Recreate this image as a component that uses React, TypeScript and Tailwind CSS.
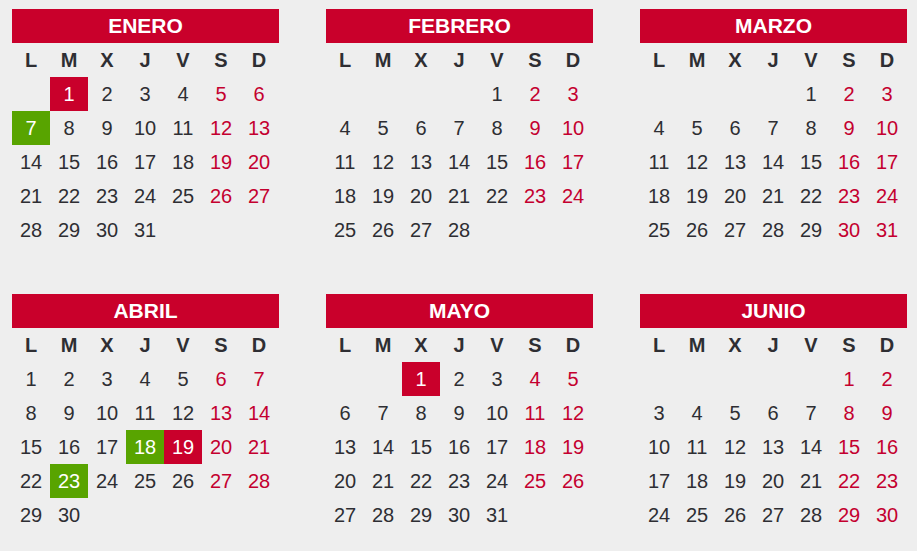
import React from "react"

type Mark = "red" | "green"

interface Month {
  name: string
  offset: number
  days: number
  marks?: Record<number, Mark>
}

const months: Month[] = [
  { name: "ENERO", offset: 1, days: 31, marks: { 1: "red", 7: "green" } },
  { name: "FEBRERO", offset: 4, days: 28 },
  { name: "MARZO", offset: 4, days: 31 },
  { name: "ABRIL", offset: 0, days: 30, marks: { 18: "green", 19: "red", 23: "green" } },
  { name: "MAYO", offset: 2, days: 31, marks: { 1: "red" } },
  { name: "JUNIO", offset: 5, days: 30 },
]

const weekdays = ["L", "M", "X", "J", "V", "S", "D"]

function MonthCard({ month }: { month: Month }) {
  const cells: (number | null)[] = []
  for (let i = 0; i < month.offset; i++) cells.push(null)
  for (let d = 1; d <= month.days; d++) cells.push(d)

  return (
    <div className="w-[267px]">
      <div className="h-[34px] bg-[#c9002b] text-white text-[21px] font-bold leading-[34px] text-center">
        {month.name}
      </div>
      <div className="grid grid-cols-[repeat(7,38px)]">
        {weekdays.map((w) => (
          <div
            key={w}
            className="h-[34px] leading-[34px] text-center text-[20px] font-bold text-[#2e2e33]"
          >
            {w}
          </div>
        ))}
        {cells.map((d, i) => {
          if (d === null) return <div key={"e" + i} className="h-[34px]" />
          const weekend = i % 7 >= 5
          const mark = month.marks?.[d]
          let cls = weekend ? "text-[#c4002f]" : "text-[#2e2e33]"
          if (mark === "red") cls = "bg-[#c9002b] text-white"
          if (mark === "green") cls = "bg-[#58a400] text-white"
          return (
            <div
              key={d}
              className={"h-[34px] leading-[34px] text-center text-[20px] " + cls}
            >
              {d}
            </div>
          )
        })}
      </div>
    </div>
  )
}

export default function App() {
  return (
    <div
      className="w-[917px] h-[551px] bg-[#eeeeee] pl-[12px] pt-[9px] overflow-hidden"
      style={{ fontFamily: '"Liberation Sans", Arial, sans-serif' }}
    >
      <div className="grid grid-cols-[repeat(3,267px)] gap-x-[47px] gap-y-[47px]">
        {months.map((m) => (
          <MonthCard key={m.name} month={m} />
        ))}
      </div>
    </div>
  )
}
